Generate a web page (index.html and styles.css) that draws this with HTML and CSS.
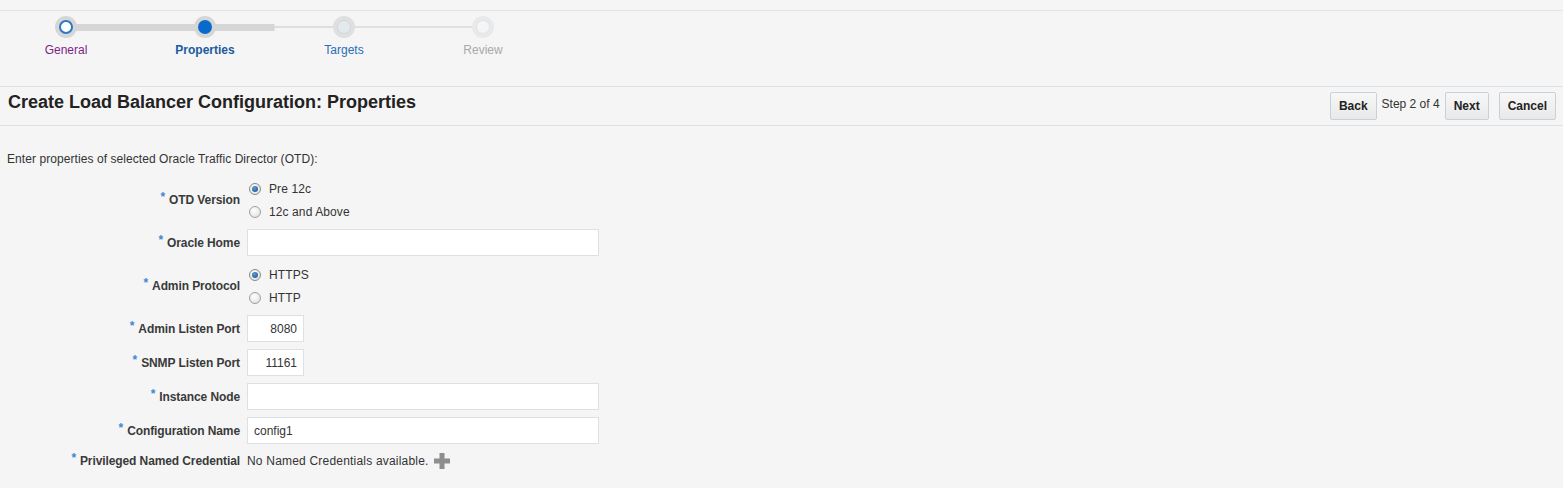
FILE: index.html
```html
<!DOCTYPE html>
<html>
<head>
<meta charset="utf-8">
<title>Create Load Balancer Configuration: Properties</title>
<link rel="stylesheet" href="styles.css">
</head>
<body>
<div class="train">
  <div class="stop visited">
    <span class="seg full"></span>
    <span class="dot"></span>
    <span class="lbl">General</span>
  </div>
  <div class="stop current">
    <span class="seg half"></span>
    <span class="dot"></span>
    <span class="lbl">Properties</span>
  </div>
  <div class="stop next">
    <span class="seg none"></span>
    <span class="dot"></span>
    <span class="lbl">Targets</span>
  </div>
  <div class="stop disabled">
    <span class="dot"></span>
    <span class="lbl">Review</span>
  </div>
</div>

<div class="titlebar">
  <h1 class="title">Create Load Balancer Configuration: Properties</h1>
  <div class="actions">
    <button class="btn">Back</button>
    <span class="step">Step 2 of 4</span>
    <button class="btn">Next</button>
    <button class="btn cancel">Cancel</button>
  </div>
</div>

<div class="content">
  <p class="intro">Enter properties of selected Oracle Traffic Director (OTD):</p>
  <div class="form">
    <div class="lab"><span class="req">*</span>OTD Version</div>
    <div class="radios">
      <div class="ropt"><span class="radio on"></span>Pre 12c</div>
      <div class="ropt"><span class="radio"></span>12c and Above</div>
    </div>

    <div class="lab"><span class="req">*</span>Oracle Home</div>
    <div class="field"><input class="inp wide" type="text" value=""></div>

    <div class="lab"><span class="req">*</span>Admin Protocol</div>
    <div class="radios">
      <div class="ropt"><span class="radio on"></span>HTTPS</div>
      <div class="ropt"><span class="radio"></span>HTTP</div>
    </div>

    <div class="lab"><span class="req">*</span>Admin Listen Port</div>
    <div class="field"><input class="inp num" type="text" value="8080"></div>

    <div class="lab"><span class="req">*</span>SNMP Listen Port</div>
    <div class="field"><input class="inp num" type="text" value="11161"></div>

    <div class="lab"><span class="req">*</span>Instance Node</div>
    <div class="field"><input class="inp wide" type="text" value=""></div>

    <div class="lab"><span class="req">*</span>Configuration Name</div>
    <div class="field"><input class="inp wide" type="text" value="config1"></div>

    <div class="lab"><span class="req">*</span>Privileged Named Credential</div>
    <div class="cred">No Named Credentials available.
      <svg class="plus" width="16" height="16" viewBox="0 0 16 16" aria-hidden="true">
        <rect x="5.5" y="0" width="5" height="16" fill="#8e8e8e"/>
        <rect x="0" y="5.5" width="16" height="5" fill="#8e8e8e"/>
      </svg>
    </div>
  </div>
</div>
</body>
</html>
```

FILE: styles.css
```css
html, body {
  margin: 0;
  padding: 0;
}
body {
  background: #f5f5f5;
  font-family: "Liberation Sans", Arial, sans-serif;
  font-size: 12px;
  color: #333;
  padding-top: 10px;
}

/* ---------- train ---------- */
.train {
  border-top: 1px solid #e1e5e9;
  display: flex;
  gap: 39px;
  padding: 5px 0 29px 16px;
}
.stop {
  position: relative;
  width: 100px;
  display: flex;
  flex-direction: column;
  align-items: center;
}
.seg {
  position: absolute;
  left: 50px;
  top: 8px;
  width: 139px;
  height: 7px;
  background-repeat: no-repeat;
}
.seg.full {
  background: #d6d6d6;
}
.seg.half {
  background:
    linear-gradient(#d6d6d6, #d6d6d6) 0 0 / 50% 100% no-repeat,
    linear-gradient(#dedede, #dedede) 0 2px / 100% 2px no-repeat;
}
.seg.none {
  background: linear-gradient(#e0e0e0, #e0e0e0) 0 2px / 100% 2px no-repeat;
}
.dot {
  position: relative;
  z-index: 1;
  width: 22px;
  height: 22px;
  border-radius: 50%;
  background: #d6d6d6;
  display: flex;
  align-items: center;
  justify-content: center;
}
.dot::after {
  content: "";
  box-sizing: border-box;
  width: 14px;
  height: 14px;
  border-radius: 50%;
}
.visited .dot::after {
  background: #fff;
  border: 2px solid #2a78c8;
}
.current .dot::after {
  background: #0a6acb;
}
.next .dot { background: #e0e0e0; }
.next .dot::after {
  background: #e4e9ee;
  border: 1px solid #cfd6dc;
}
.disabled .dot { background: #e9e9e9; }
.disabled .dot::after {
  background: #f3f5f6;
  border: 1px solid #e0e4e7;
}
.lbl {
  margin-top: 5px;
  line-height: 14px;
  white-space: nowrap;
}
.visited .lbl { color: #7d1f88; }
.current .lbl { color: #1a5b9d; font-weight: bold; }
.next .lbl { color: #2a6db6; }
.disabled .lbl { color: #a9a9a9; }

/* ---------- title bar ---------- */
.titlebar {
  border-top: 1px solid #dbe1e6;
  border-bottom: 1px solid #dbe1e6;
  height: 38px;
  display: flex;
  justify-content: space-between;
  align-items: flex-start;
  padding: 0 7px 0 8px;
}
.title {
  margin: 4px 0 0 0;
  font-size: 18px;
  line-height: 22px;
  font-weight: bold;
  color: #222;
}
.actions {
  display: flex;
  align-items: center;
  margin-top: 5px;
}
.btn {
  box-sizing: border-box;
  height: 28px;
  padding: 0 8px;
  border: 1px solid #c9d1d8;
  border-radius: 2px;
  background: linear-gradient(#f7f7f7, #e9e9e9);
  font-family: "Liberation Sans", Arial, sans-serif;
  font-size: 12px;
  font-weight: bold;
  color: #222;
}
.step {
  margin: 0 5px;
  line-height: 14px;
  padding-bottom: 4px;
  color: #333;
}
.btn.cancel { margin-left: 10px; }

/* ---------- form ---------- */
.content {
  padding: 26px 7px 0 7px;
}
.intro {
  margin: 0 0 11px 0;
  line-height: 14px;
  letter-spacing: 0.07px;
}
.form {
  display: grid;
  grid-template-columns: 233px auto;
  column-gap: 7px;
  row-gap: 7px;
  justify-items: start;
}
.lab {
  justify-self: end;
  align-self: center;
  font-weight: bold;
  color: #3a3a3a;
  line-height: 14px;
  white-space: nowrap;
  letter-spacing: -0.1px;
}
.req {
  color: #3f86d3;
  font-weight: bold;
  position: relative;
  top: -3px;
  margin-right: 4px;
}
.radios {
  display: flex;
  flex-direction: column;
  margin-bottom: -1px;
}
.ropt {
  height: 23px;
  display: flex;
  align-items: center;
  gap: 8px;
  padding-left: 2px;
  color: #333;
  letter-spacing: 0.1px;
}
.radio {
  box-sizing: border-box;
  width: 12px;
  height: 12px;
  border-radius: 50%;
  border: 1px solid #a0a0a0;
  background: radial-gradient(circle at 40% 35%, #ffffff, #dcdcdc);
  display: flex;
  align-items: center;
  justify-content: center;
}
.radio.on {
  border-color: #8a8a8a;
}
.radio.on::after {
  content: "";
  width: 6px;
  height: 6px;
  border-radius: 50%;
  background: radial-gradient(circle at 40% 35%, #5b9ad3, #174e82);
}
.field {
  display: flex;
}
.inp {
  box-sizing: border-box;
  height: 27px;
  border: 1px solid #dde1e4;
  background: #fff;
  font-family: "Liberation Sans", Arial, sans-serif;
  font-size: 12px;
  color: #333;
  padding: 0 6px;
  margin: 0;
  outline: none;
}
.inp.wide { width: 352px; }
.inp.num { width: 57px; text-align: right; }
.cred {
  height: 20px;
  display: flex;
  align-items: center;
  gap: 5px;
  color: #333;
  letter-spacing: 0.2px;
}
.plus {
  display: block;
}
```
